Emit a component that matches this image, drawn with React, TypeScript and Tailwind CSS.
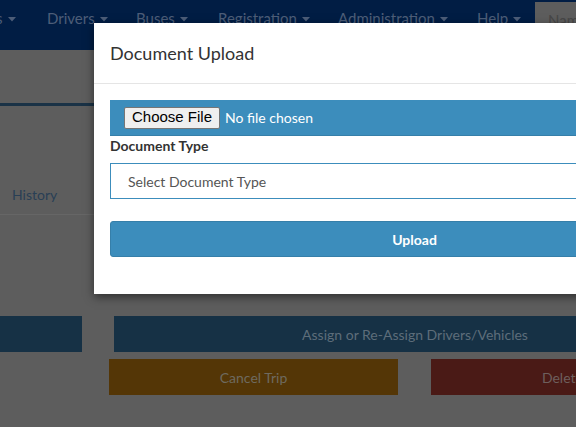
function Caret() {
  return (
    <svg width="8" height="5" viewBox="0 0 8 5" className="ml-[5px] mt-[2px] shrink-0">
      <path d="M0 0h8L4 4.5z" fill="#4d5d78" />
    </svg>
  );
}

function Backdrop() {
  return (
    <div className="absolute inset-0 bg-[#5d5d5d]">
      <nav className="flex h-[50px] items-start bg-[#011d44] text-[15px] text-[#4d5d78]">
        <div className="flex h-[36px] shrink-0 items-center">
          <span className="flex w-[47px] shrink-0 items-center">
            <span className="-ml-[4px]">s</span>
            <Caret />
          </span>
          <span className="flex w-[89px] shrink-0 items-center">Drivers<Caret /></span>
          <span className="flex w-[82px] shrink-0 items-center">Buses<Caret /></span>
          <span className="flex w-[120px] shrink-0 items-center">Registration<Caret /></span>
          <span className="flex w-[139px] shrink-0 items-center">Administration<Caret /></span>
          <span className="flex w-[58px] shrink-0 items-center">Help<Caret /></span>
        </div>
        <div className="mt-[2px] h-[40px] w-[120px] shrink-0 bg-[#5d5d5d] pl-[13px] pt-[7px] text-[#474747]">Name</div>
      </nav>
      <div className="h-[53px]" />
      <div className="h-[3px] bg-[#1a3246]" />
      <div className="flex h-[108px] items-end pb-[9px] pl-[12px] text-[14px] text-[#293f55]">History</div>
      <div className="h-px w-[94px] bg-[#666]" />
      <div className="h-[101px]" />
      <div className="flex h-[36px]">
        <div className="w-[82px] shrink-0 bg-[#163145]" />
        <div className="ml-[32px] flex w-[602px] shrink-0 items-center justify-center bg-[#163145] text-[14px] text-[#5d6d7a]">
          Assign or Re-Assign Drivers/Vehicles
        </div>
      </div>
      <div className="mt-[7px] flex h-[36px]">
        <div className="ml-[109px] flex w-[289px] shrink-0 items-center justify-center bg-[#543606] text-[14px] text-[#6e6a5f]">
          Cancel Trip
        </div>
        <div className="ml-[33px] flex w-[289px] shrink-0 items-center justify-center bg-[#4a1a16] text-[14px] text-[#6e5f5d]">
          Delete Trip
        </div>
      </div>
    </div>
  );
}

export default function App() {
  return (
    <div className="relative h-[427px] w-[576px] overflow-hidden font-['Lato','Noto_Sans',sans-serif]">
      <Backdrop />
      <div className="absolute left-[94px] top-[23px] w-[641px] bg-white shadow-[0_3px_9px_rgba(0,0,0,0.5)]">
        <div className="flex h-[61px] items-center border-b border-[#e5e5e5] px-[16px] text-[18px] text-[#333]">
          Document Upload
        </div>
        <div className="px-[16px] pt-[16px] pb-[37px]">
          <div className="flex h-[36px] items-center border-b border-[#367fa9] bg-[#3c8dbc] pl-[14px]">
            <span className="flex h-[22px] items-center rounded-[2px] border border-[#767676] bg-[#efefef] px-[7px] font-['Liberation_Sans',Arial,sans-serif] text-[15px] text-black">
              Choose File
            </span>
            <span className="ml-[5px] text-[14px] text-white">No file chosen</span>
          </div>
          <label className="mb-[7px] block text-[14px] leading-[20px] font-bold text-[#333]">Document Type</label>
          <div className="flex h-[36px] items-center border border-[#3c8dbc] pl-[17px] text-[14px] text-[#555]">
            Select Document Type
          </div>
          <button className="mt-[22px] flex h-[36px] w-full items-center justify-center rounded-[3px] border border-[#367fa9] bg-[#3c8dbc] text-[14px] font-bold text-white">
            Upload
          </button>
        </div>
      </div>
    </div>
  );
}
